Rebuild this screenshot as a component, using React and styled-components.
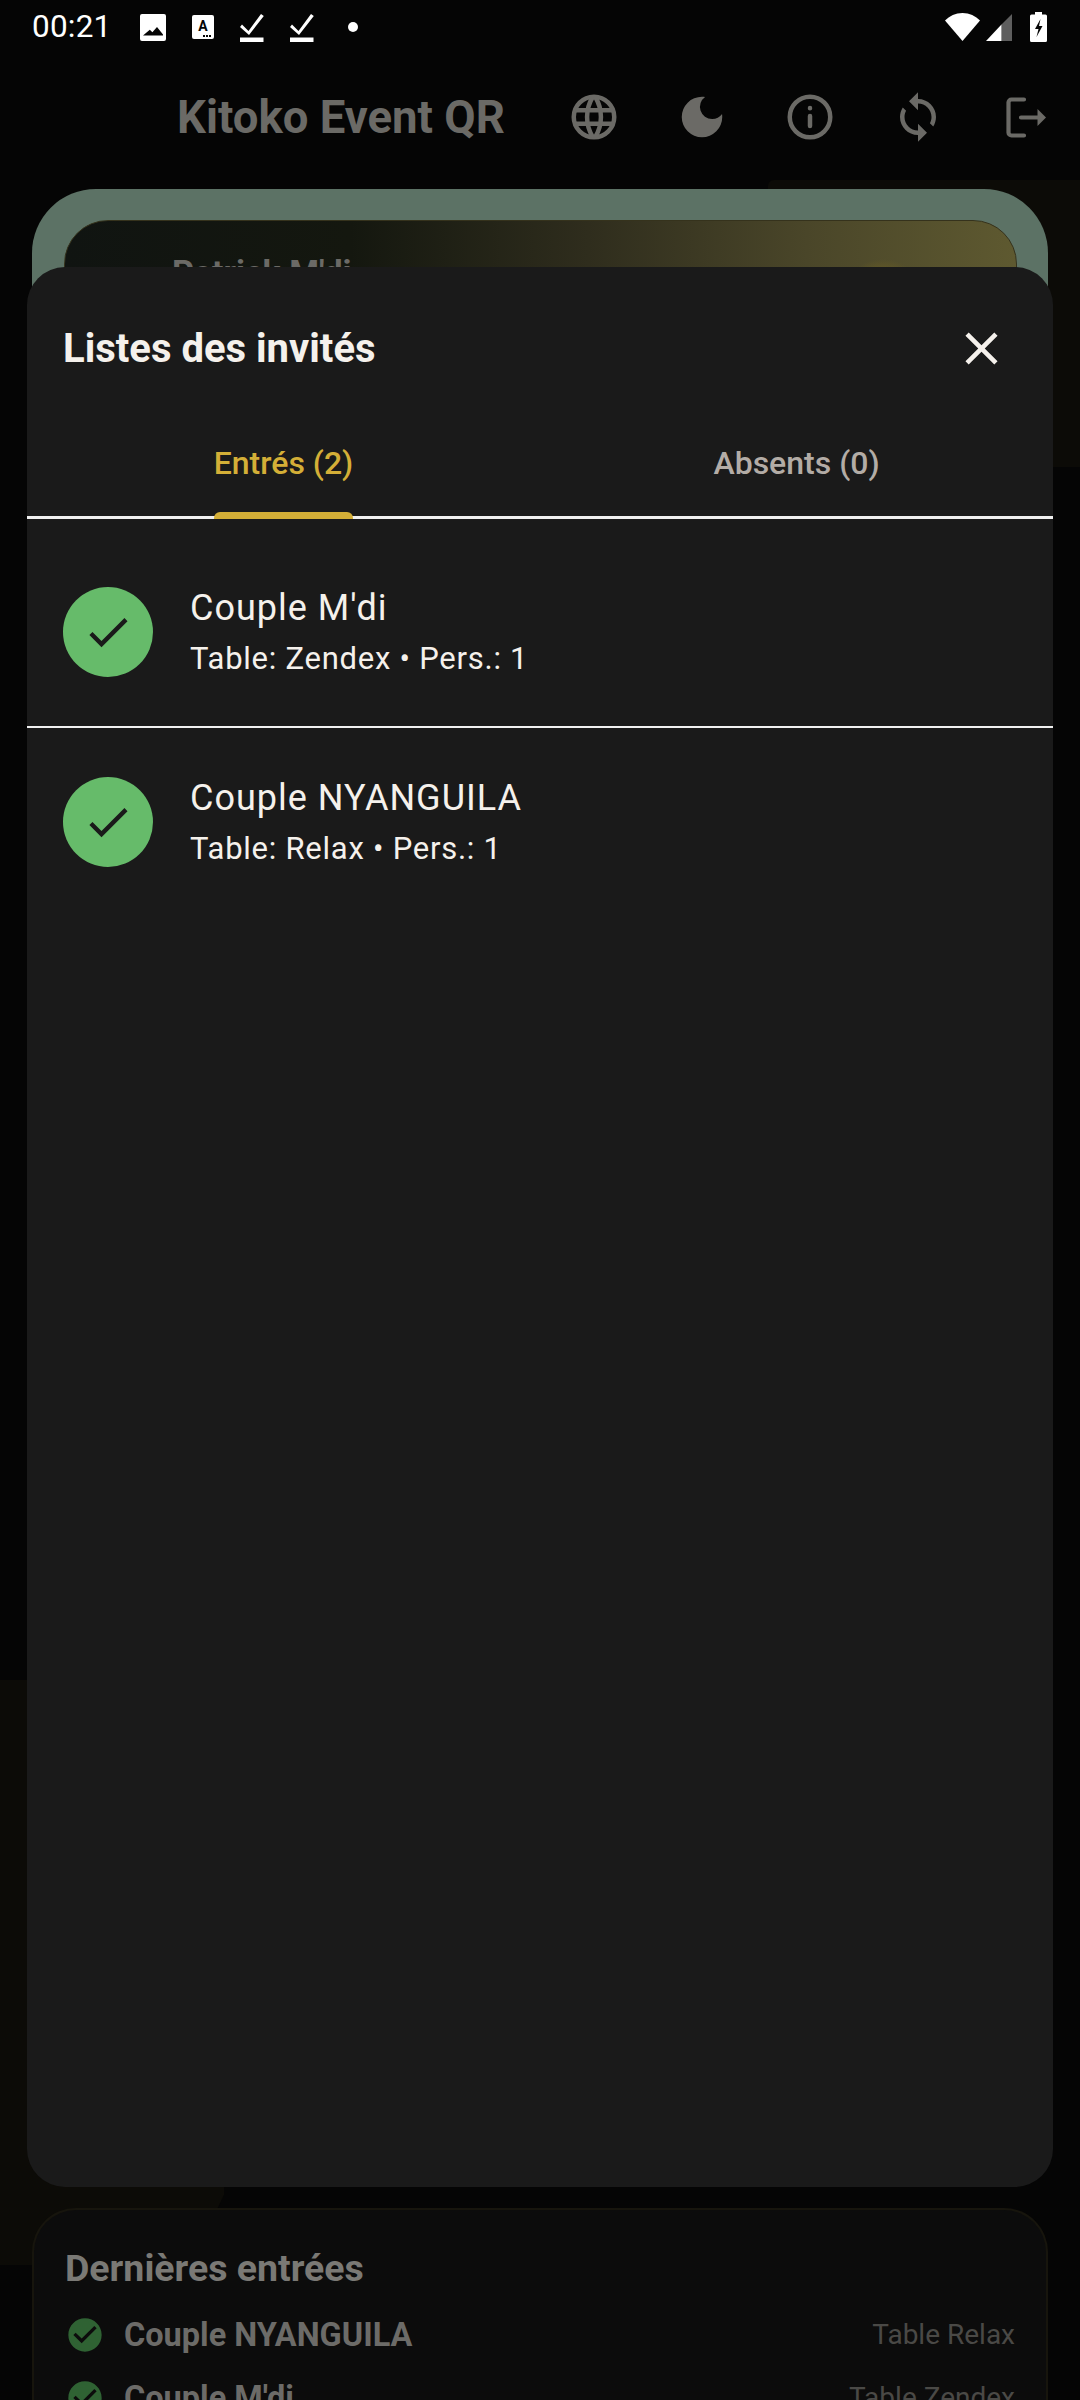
import React from "react";
import styled, { createGlobalStyle } from "styled-components";

const GlobalStyle = createGlobalStyle`
  html, body {
    margin: 0;
    padding: 0;
    background: #050505;
  }
  * {
    box-sizing: border-box;
  }
`;

const Page = styled.div`
  position: relative;
  width: 1080px;
  height: 2400px;
  overflow: hidden;
  display: flex;
  flex-direction: column;
  background: #050505;
  font-family: Roboto, "Liberation Sans", sans-serif;
`;

// faint decorative shapes of the page behind the sheet
const Blob = styled.div`
  position: absolute;
  background: #0c0b07;
  ${({ $corner }) =>
    $corner === "top"
      ? `left: 768px; top: 180px; width: 340px; height: 287px; border-radius: 6px 0 0 0;`
      : `left: 0; top: 1680px; width: 224px; height: 585px; clip-path: polygon(0 0, 100% 0, 100% 88%, 85% 100%, 0 100%);`}
`;

const StatusBar = styled.div`
  position: relative;
  height: 54px;
  flex: none;
  display: flex;
  align-items: center;
  padding: 0 33px 0 32px;
  color: #fff;
`;

const Time = styled.span`
  font-size: 31.5px;
  line-height: 54px;
  width: 108px;
  letter-spacing: 0.2px;
`;

const StatusIcons = styled.div`
  display: flex;
  align-items: center;
  gap: ${({ $gap }) => $gap}px;
`;

const StatusRight = styled(StatusIcons)`
  margin-left: auto;
`;

const BatterySlot = styled.span`
  margin-left: 12px;
`;

const Dot = styled.span`
  width: 10px;
  height: 10px;
  border-radius: 50%;
  background: #fff;
  margin-left: 34px;
`;

const AppBar = styled.header`
  position: relative;
  flex: none;
  height: 135px;
  display: flex;
  align-items: center;
  padding-bottom: 9px;
  color: #6b6a66;
`;

const AppTitle = styled.h1`
  margin: 0 0 0 177px;
  width: 390px;
  font-size: 45.5px;
  font-weight: 700;
  white-space: nowrap;
`;

const AppAction = styled.span`
  width: 108px;
  flex: none;
  display: flex;
  align-items: center;
  justify-content: center;
`;

const HeroCard = styled.section`
  position: relative;
  flex: 1;
  margin: 0 32px 120px;
  padding: 31px 31px 31px 32px;
  border-radius: 64px;
  background: #5c7265;
`;

const HeroInner = styled.div`
  height: 100%;
  border-radius: 44px;
  border: 1px solid #35321c;
  padding: 31px 107px;
  background:
    radial-gradient(circle at 86% 80px, #645a26 0, #645a26 28px, transparent 42px),
    linear-gradient(90deg, #101411 0%, #14170f 30%, #2f2d1d 55%, #4a4629 78%, #5e5930 100%);
  color: #6b6a66;
  font-size: 34px;
  font-weight: 700;
`;

const RecentCard = styled.section`
  position: relative;
  flex: none;
  height: 192px;
  margin: 0 32px;
  padding: 38px 31px 0 31px;
  background: #0c0c0c;
  border: 2px solid #17150d;
  border-bottom: 0;
  border-radius: 44px 44px 0 0;
`;

const RecentTitle = styled.h2`
  margin: 0 0 15px;
  font-size: 37.5px;
  line-height: 40px;
  font-weight: 700;
  color: #7a7975;
`;

const RecentRow = styled.div`
  display: flex;
  align-items: center;
  height: 63px;
  justify-content: space-between;
`;

const RecentName = styled.span`
  display: flex;
  align-items: center;
  gap: 19px;
  font-size: 32.5px;
  font-weight: 700;
  color: #6c6b68;
`;

const RecentTable = styled.span`
  font-size: 28px;
  color: #4a4946;
`;

const RecentIcon = styled.span`
  color: #2f6233;
`;

const Sheet = styled.aside`
  position: absolute;
  left: 27px;
  top: 267px;
  width: 1026px;
  height: 1920px;
  border-radius: 38px;
  background: #1a1a1a;
  display: flex;
  flex-direction: column;
  color: #f5f1ec;
`;

const SheetHeader = styled.div`
  height: 162px;
  flex: none;
  display: flex;
  align-items: center;
  justify-content: space-between;
  padding: 0 44px 0 36px;
`;

const SheetTitle = styled.h2`
  margin: 0;
  font-size: 40px;
  font-weight: 700;
`;

const Tabs = styled.div`
  height: 90px;
  flex: none;
  display: grid;
  grid-template-columns: 1fr 1fr;
  border-bottom: 3px solid #f0f0f0;
`;

const Tab = styled.div`
  display: flex;
  justify-content: center;
`;

const TabLabel = styled.span`
  position: relative;
  height: 100%;
  padding-top: 14px;
  font-size: 32px;
  line-height: 40px;
  font-weight: 500;
  color: ${({ $active }) => ($active ? "#d4af37" : "#b3aca6")};
`;

const TabIndicator = styled.span`
  position: absolute;
  left: 0;
  right: 0;
  bottom: -3px;
  height: 7px;
  border-radius: 6px 6px 0 0;
  background: #d4af37;
`;

const GuestList = styled.div`
  padding-top: 18px;
`;

const GuestRow = styled.div`
  height: ${({ $last }) => ($last ? "188px" : "191px")};
  display: flex;
  align-items: center;
  gap: 37px;
  padding: 0 36px;
  border-bottom: ${({ $last }) => ($last ? "0" : "2px solid #f0f0f0")};
`;

const GuestAvatar = styled.div`
  width: 90px;
  height: 90px;
  flex: none;
  border-radius: 50%;
  background: #66bb6a;
  display: flex;
  align-items: center;
  justify-content: center;
  color: #1a1a1a;
`;

const GuestText = styled.div`
  padding-top: 3px;
`;

const GuestName = styled.div`
  font-size: 36px;
  line-height: 50px;
  letter-spacing: 1px;
`;

const GuestInfo = styled.div`
  margin-top: 1px;
  font-size: 31px;
  line-height: 50px;
  letter-spacing: 0.75px;
`;

const Svg = ({ size, w, h, view = "0 0 24 24", children, ...rest }) => (
  <svg
    width={w || size}
    height={h || size}
    viewBox={view}
    fill="currentColor"
    style={{ display: "block", flex: "none" }}
    {...rest}
  >
    {children}
  </svg>
);

const CHECK = "M9 16.17L4.83 12l-1.42 1.41L9 19 21 7l-1.41-1.41z";
const CHECK_CIRCLE =
  "M12 2C6.48 2 2 6.48 2 12s4.48 10 10 10 10-4.48 10-10S17.52 2 12 2zm-2 15l-5-5 1.41-1.41L10 14.17l7.59-7.59L19 8l-9 9z";
const CLOSE =
  "M19 6.41L17.59 5 12 10.59 6.41 5 5 6.41 10.59 12 5 17.59 6.41 19 12 13.41 17.59 19 19 17.59 13.41 12z";
const MOON =
  "M12 3a9 9 0 1 0 9 9c0-.46-.04-.92-.1-1.36a5.389 5.389 0 0 1-4.4 2.26 5.403 5.403 0 0 1-3.14-9.8c-.44-.06-.9-.1-1.36-.1z";
const SYNC =
  "M12 4V1L8 5l4 4V6c3.31 0 6 2.69 6 6 0 1.01-.25 1.97-.7 2.8l1.46 1.46C19.54 15.03 20 13.57 20 12c0-4.42-3.58-8-8-8zm0 14c-3.31 0-6-2.69-6-6 0-1.01.25-1.97.7-2.8L5.24 7.74C4.46 8.97 4 10.43 4 12c0 4.42 3.58 8 8 8v3l4-4-4-4v3z";

const ImageIcon = () => (
  <Svg w={26} h={27} view="0 0 26 27">
    <path
      fillRule="evenodd"
      d="M2 0h22a2 2 0 0 1 2 2v23a2 2 0 0 1-2 2H2a2 2 0 0 1-2-2V2a2 2 0 0 1 2-2zM3 21.5h20v-1l-6-7.5-4.6 5.2-2.6-2.4z"
    />
  </Svg>
);

const TextIcon = () => (
  <Svg w={22} h={24} view="0 0 22 24">
    <rect width="22" height="24" rx="2" />
    <text x="11" y="16" textAnchor="middle" fontSize="14" fontWeight="700" fontFamily="Roboto" fill="#050505">
      A
    </text>
    <rect x="11" y="20" width="2" height="2" fill="#050505" />
    <rect x="14" y="20" width="2" height="2" fill="#050505" />
    <rect x="17" y="20" width="2" height="2" fill="#050505" />
  </Svg>
);

const DoneIcon = () => (
  <Svg w={24} h={29} view="0 0 24 29">
    <path d="M0 24.5h23.5V29H0z" />
    <path d="M2 11.5l6.5 6.5L21 1l2.8 2L9 22 0 14z" />
  </Svg>
);

const WifiIcon = () => (
  <Svg w={35} h={28} view="0 0 35 28">
    <path d="M17.5 28L0 7.5C4.5 3 10.5 0 17.5 0S30.5 3 35 7.5z" />
  </Svg>
);

const SignalIcon = () => (
  <Svg w={26} h={27} view="0 0 26 27">
    <path d="M15.5 10.5L26 0v27H15.5z" fill="#5e5e5e" />
    <path d="M0 27l15.5-16.5V27z" />
  </Svg>
);

const BatteryIcon = () => (
  <Svg w={17} h={30} view="0 0 17 30">
    <path d="M5 0h7v2.5h3.5a1.5 1.5 0 0 1 1.5 1.5v24.5a1.5 1.5 0 0 1-1.5 1.5h-14A1.5 1.5 0 0 1 0 28.500V4a1.500 1.500 0 0 1 1.500-1.500H5z" />
    <path d="M10.500 7L5 17h3.500L6.500 25l6-11H9z" fill="#050505" />
  </Svg>
);

const GlobeIcon = () => (
  <Svg size={54} fill="none" stroke="currentColor" strokeWidth="2">
    <circle cx="12" cy="12" r="9" />
    <path d="M3.600 9h16.800M3.600 15h16.800M11.500 3a17 17 0 0 0 0 18M12.500 3a17 17 0 0 1 0 18" />
  </Svg>
);

const InfoIcon = () => (
  <Svg size={54} fill="none" stroke="currentColor" strokeWidth="2" strokeLinecap="round">
    <circle cx="12" cy="12" r="9" />
    <path d="M12 11.500v4.500M12 8v.1" />
  </Svg>
);

const LogoutIcon = () => (
  <Svg w={40} h={41} view="0 0 40 41">
    <path
      d="M18 2.500H5.500a3 3 0 0 0-3 3v30a3 3 0 0 0 3 3H18M15 20.500h17"
      fill="none"
      stroke="currentColor"
      strokeWidth="4.200"
      strokeLinecap="round"
    />
    <path d="M31.500 12L40 20.500 31.500 29z" />
  </Svg>
);

const guests = [
  { name: "Couple M'di", info: "Table: Zendex • Pers.: 1" },
  { name: "Couple NYANGUILA", info: "Table: Relax • Pers.: 1" },
];

const recent = [
  { name: "Couple NYANGUILA", table: "Table Relax" },
  { name: "Couple M'di", table: "Table Zendex" },
];

export default function App() {
  return (
    <Page>
      <GlobalStyle />
      <Blob $corner="top" />
      <Blob $corner="bottom" />

      <StatusBar>
        <Time>00:21</Time>
        <StatusIcons $gap={26}>
          <ImageIcon />
          <TextIcon />
          <DoneIcon />
          <DoneIcon />
        </StatusIcons>
        <Dot />
        <StatusRight $gap={6}>
          <WifiIcon />
          <SignalIcon />
          <BatterySlot>
            <BatteryIcon />
          </BatterySlot>
        </StatusRight>
      </StatusBar>

      <AppBar>
        <AppTitle>Kitoko Event QR</AppTitle>
        <AppAction>
          <GlobeIcon />
        </AppAction>
        <AppAction>
          <Svg size={54}>
            <path d={MOON} />
          </Svg>
        </AppAction>
        <AppAction>
          <InfoIcon />
        </AppAction>
        <AppAction>
          <Svg size={54}>
            <path d={SYNC} />
          </Svg>
        </AppAction>
        <AppAction>
          <LogoutIcon />
        </AppAction>
      </AppBar>

      <HeroCard>
        <HeroInner>Patrick M'di</HeroInner>
      </HeroCard>

      <RecentCard>
        <RecentTitle>Dernières entrées</RecentTitle>
        {recent.map((r) => (
          <RecentRow key={r.name}>
            <RecentName>
              <RecentIcon>
                <Svg size={40}>
                  <path d={CHECK_CIRCLE} />
                </Svg>
              </RecentIcon>
              {r.name}
            </RecentName>
            <RecentTable>{r.table}</RecentTable>
          </RecentRow>
        ))}
      </RecentCard>

      <Sheet>
        <SheetHeader>
          <SheetTitle>Listes des invités</SheetTitle>
          <Svg size={55}>
            <path d={CLOSE} />
          </Svg>
        </SheetHeader>
        <Tabs>
          <Tab>
            <TabLabel $active>
              Entrés (2)
              <TabIndicator />
            </TabLabel>
          </Tab>
          <Tab>
            <TabLabel>Absents (0)</TabLabel>
          </Tab>
        </Tabs>
        <GuestList>
          {guests.map((g, i) => (
            <GuestRow key={g.name} $last={i === guests.length - 1}>
              <GuestAvatar>
                <Svg size={52}>
                  <path d={CHECK} />
                </Svg>
              </GuestAvatar>
              <GuestText>
                <GuestName>{g.name}</GuestName>
                <GuestInfo>{g.info}</GuestInfo>
              </GuestText>
            </GuestRow>
          ))}
        </GuestList>
      </Sheet>
    </Page>
  );
}
